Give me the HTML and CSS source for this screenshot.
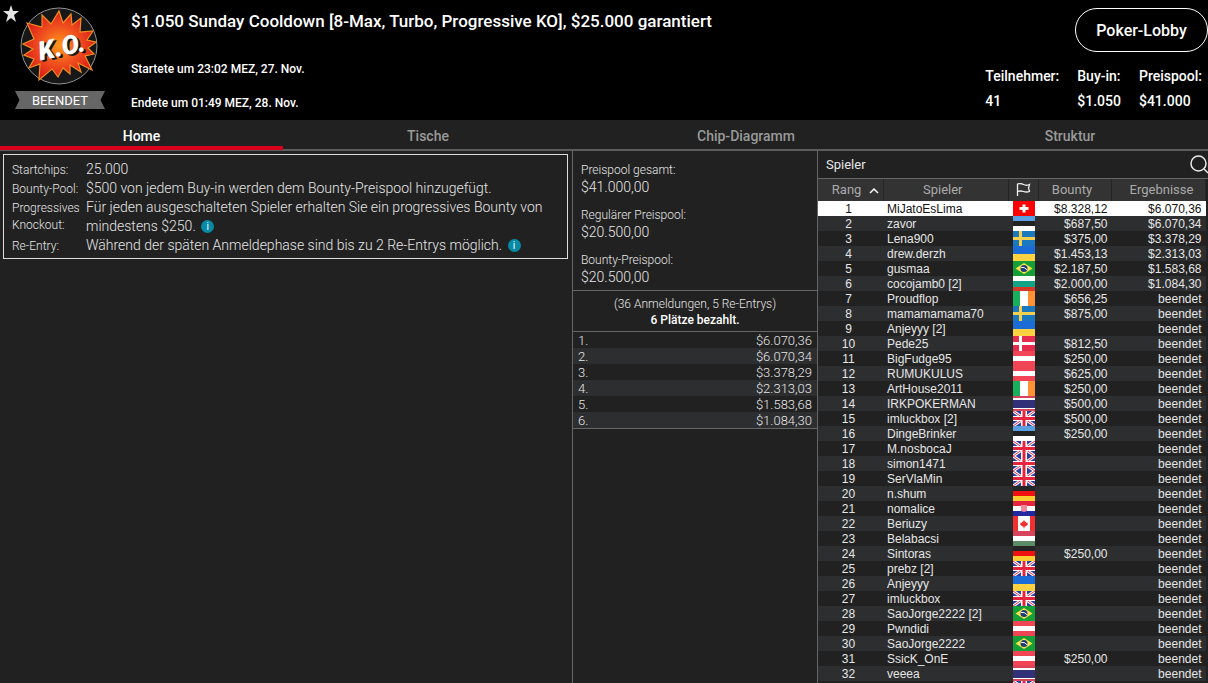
FILE: index.html
```html
<!doctype html>
<html lang="de">
<head>
	<meta charset="UTF-8">
	<meta name="viewport" content="width=device-width, initial-scale=1">
	<title>Sunday Cooldown</title>
	<link rel="stylesheet" href="styles.css">
</head>
<body>
	<svg class="defs" aria-hidden="true">
		<symbol id="ch" viewBox="0 0 22 15"><path fill="#f00" d="M0 0h22v15H0z"/><path fill="#fff" d="M9.500 3.500h3v2.500h3v3h-3v2.500h-3V9h-3V6h3z"/></symbol>
		<symbol id="ee" viewBox="0 0 22 15"><path fill="#5a9fe0" d="M0 0h22v5H0z"/><path fill="#222" d="M0 5h22v5H0z"/><path fill="#fff" d="M0 10h22v5H0z"/></symbol>
		<symbol id="se" viewBox="0 0 22 15"><path fill="#1c78bd" d="M0 0h22v15H0z"/><path fill="#f3d04e" d="M6 0h3v15H6zM0 6h22v3H0z"/></symbol>
		<symbol id="ua" viewBox="0 0 22 15"><path fill="#1b6cd6" d="M0 0h22v8H0z"/><path fill="#ffd242" d="M0 8h22v7H0z"/></symbol>
		<symbol id="br" viewBox="0 0 22 15"><path fill="#15a037" d="M0 0h22v15H0z"/><path fill="#fce14a" d="M11 2l8.500 5.500L11 13 2.500 7.500z"/><circle cx="11" cy="7.500" r="3.500" fill="#1d3d78"/><path d="M7.800 6.300q4-.5 6.300 2.500" fill="none" stroke="#fff"/></symbol>
		<symbol id="bg" viewBox="0 0 22 15"><path fill="#fff" d="M0 0h22v5H0z"/><path fill="#12a284" d="M0 5h22v6H0z"/><path fill="#d43829" d="M0 11h22v4H0z"/></symbol>
		<symbol id="ie" viewBox="0 0 22 15"><path fill="#19b05b" d="M0 0h7v15H0z"/><path fill="#fff" d="M7 0h8v15H7z"/><path fill="#ff9233" d="M15 0h7v15h-7z"/></symbol>
		<symbol id="dk" viewBox="0 0 22 15"><path fill="#e52b4e" d="M0 0h22v15H0z"/><path fill="#fff" d="M6 0h3v15H6zM0 6h22v3H0z"/></symbol>
		<symbol id="at" viewBox="0 0 22 15"><path fill="#f04555" d="M0 0h22v15H0z"/><path fill="#fff" d="M0 5h22v5H0z"/></symbol>
		<symbol id="th" viewBox="0 0 22 15"><path fill="#d8425a" d="M0 0h22v15H0z"/><path fill="#fff" d="M0 2h22v11H0z"/><path fill="#33307a" d="M0 4h22v8H0z"/></symbol>
		<symbol id="gb" viewBox="0 0 22 15"><path fill="#2b3f9b" d="M0 0h22v15H0z"/><path stroke="#fff" stroke-width="3" d="M0 0l22 15M22 0L0 15"/><path stroke="#e52b4e" d="M0 0l22 15M22 0L0 15"/><path fill="#fff" d="M8 0h6v15H8zM0 5h22v5H0z"/><path fill="#e5253f" d="M9.500 0h3v15h-3zM0 6h22v3H0z"/></symbol>
		<symbol id="de" viewBox="0 0 22 15"><path fill="#252525" d="M0 0h22v5H0z"/><path fill="#ef1010" d="M0 5h22v5H0z"/><path fill="#ffcc31" d="M0 10h22v5H0z"/></symbol>
		<symbol id="hr" viewBox="0 0 22 15"><path fill="#e5253f" d="M0 0h22v5H0z"/><path fill="#fff" d="M0 5h22v5H0z"/><path fill="#2228a0" d="M0 10h22v5H0z"/><path fill="#f08a9a" d="M8 4h6v6l-3 1-3-1z"/></symbol>
		<symbol id="ca" viewBox="0 0 22 15"><path fill="#fff" d="M0 0h22v15H0z"/><path fill="#f23030" d="M0 0h5v15H0zM17 0h5v15h-5zM11 4l1.200 2 1-.5L13 7l2-.5-.6 1.500.6.5-2.500 2h-1V12h-1v-1.500h-1L7 8.500l.6-.5L7 6.500 9 7l-.2-1.500 1 .5z"/></symbol>
		<symbol id="hu" viewBox="0 0 22 15"><path fill="#d6455d" d="M0 0h22v5H0z"/><path fill="#fff" d="M0 5h22v5H0z"/><path fill="#5b8c68" d="M0 10h22v5H0z"/></symbol>
	</svg>

	<header class="header">
		<button class="favorite" aria-label="Favorit">
			<svg width="16" height="17" viewBox="0 0 16 17"><path fill="#e4e4e4" d="M8 0l2 6h6l-5 4 2 7-5-4-5 4 2-7-5-4h6z"/></svg>
		</button>
		<div class="logo_box">
			<svg class="logo" width="80" height="80" viewBox="0 0 80 80" role="img" aria-label="K.O.">
				<defs>
					<radialGradient id="burst">
						<stop offset="0" stop-color="#ff9a1c"/>
						<stop offset=".55" stop-color="#f0501e"/>
						<stop offset="1" stop-color="#dc1f1c"/>
					</radialGradient>
				</defs>
				<circle cx="39" cy="40" r="38" fill="#171717" stroke="#929292"/>
				<path fill="url(#burst)" stroke="#ef8e20" stroke-width="1.200" d="M7 17L22 21 22 9 31 18 39 5 43 17 51 8 52 19 61 12 60 26 73 25 67 34 76 36 68 42 74 48 65 50 72 64 58 57 61 66 50 59 50 68 43 62 38 71 32 63 19 74 20 58 9 62 14 53 4 49 13 43 3 38 14 33z"/>
				<g class="logo_text">
					<text x="20" y="52" fill="#161616" transform="rotate(-12 40 42)">K.O.</text>
					<text x="18" y="50" fill="#fff" transform="rotate(-12 40 42)">K.O.</text>
				</g>
			</svg>
			<div class="status">BEENDET</div>
		</div>
		<div class="title_box">
			<h1>$1.050 Sunday Cooldown [8-Max, Turbo, Progressive KO], $25.000 garantiert</h1>
			<p>Startete um 23:02 MEZ, 27. Nov.</p>
			<p>Endete um 01:49 MEZ, 28. Nov.</p>
		</div>
		<div class="header_right">
			<button class="lobby">Poker-Lobby</button>
			<dl class="stats">
				<div><dt>Teilnehmer:</dt><dd>41</dd></div>
				<div><dt>Buy-in:</dt><dd>$1.050</dd></div>
				<div><dt>Preispool:</dt><dd>$41.000</dd></div>
			</dl>
		</div>
	</header>

	<nav class="tabs">
		<button class="tab tab_home active">Home</button>
		<button class="tab tab_tables">Tische</button>
		<button class="tab tab_chips">Chip-Diagramm</button>
		<button class="tab tab_structure">Struktur</button>
	</nav>

	<main class="content">
		<section class="left">
			<dl class="info">
				<dt>Startchips:</dt>
				<dd>25.000</dd>
				<dt>Bounty-Pool:</dt>
				<dd>$500 von jedem Buy-in werden dem Bounty-Preispool hinzugefügt.</dd>
				<dt>Progressives Knockout:</dt>
				<dd>Für jeden ausgeschalteten Spieler erhalten Sie ein progressives Bounty von mindestens $250. <button class="hint">i</button></dd>
				<dt>Re-Entry:</dt>
				<dd>Während der späten Anmeldephase sind bis zu 2 Re-Entrys möglich. <button class="hint">i</button></dd>
			</dl>
		</section>

		<section class="middle">
			<dl class="pool">
				<dt>Preispool gesamt:</dt><dd>$41.000,00</dd>
				<dt>Regulärer Preispool:</dt><dd>$20.500,00</dd>
				<dt>Bounty-Preispool:</dt><dd>$20.500,00</dd>
			</dl>
			<div class="entries">
				<p>(36 Anmeldungen, 5 Re-Entrys)</p>
				<p><b>6 Plätze bezahlt.</b></p>
			</div>
			<table class="payouts">
				<tr><td>1.</td><td>$6.070,36</td></tr>
				<tr><td>2.</td><td>$6.070,34</td></tr>
				<tr><td>3.</td><td>$3.378,29</td></tr>
				<tr><td>4.</td><td>$2.313,03</td></tr>
				<tr><td>5.</td><td>$1.583,68</td></tr>
				<tr><td>6.</td><td>$1.084,30</td></tr>
			</table>
		</section>

		<section class="right">
			<div class="search">
				<h2>Spieler</h2>
				<button class="search_btn" aria-label="Suchen">
					<svg width="18" height="20" viewBox="0 0 18 20" fill="none" stroke="#e8e8e8" stroke-width="1.500"><circle cx="8.500" cy="8.500" r="7.500"/><path d="M14 14l4 4"/></svg>
				</button>
			</div>
			<table class="players">
				<thead>
					<tr>
						<th class="rank">Rang <svg width="10" height="7" viewBox="0 0 10 7" fill="none" stroke="#fff" stroke-width="1.500"><path d="M1 6l4-4 4 4"/></svg></th>
						<th class="name">Spieler</th>
						<th class="flag" aria-label="Land"><svg width="15" height="13" viewBox="0 0 15 13" fill="none" stroke="#eee" stroke-width="1.300"><path d="M1.500 13V1q3-1 6 .5t6 0L12.500 5l1 3.500q-3 1-6 0t-6 0"/></svg></th>
						<th class="bounty">Bounty</th>
						<th class="result">Ergebnisse</th>
					</tr>
				</thead>
				<tbody id="players"></tbody>
			</table>
		</section>
	</main>
<script src="script.js"></script>
</body>
</html>
```
FILE: styles.css
```css
*{box-sizing: border-box;
  margin: 0;
  padding: 0;}
body{background-color: #212121;
     color: #e6e6e6;
     font-family: Roboto, sans-serif;
     height: 100vh;
     display: flex;
     flex-direction: column;
     overflow: hidden;}
button{background: none;
       border: 0;
       color: inherit;
       font-family: inherit;
       cursor: pointer;}
.defs{position: absolute;
      width: 0;
      height: 0;}

/* header */
.header{background-color: #000;
        color: #fff;
        display: flex;
        height: 120px;
        flex: none;}
.favorite{width: 20px;
          height: 24px;
          padding-left: 2px;
          margin-top: 3px;
          margin-right: -5px;
          z-index: 1;}
.logo_box{width: 90px;
          padding-top: 6px;
          display: flex;
          flex-direction: column;
          align-items: center;
          gap: 5px;}
.logo{display: block;}
.logo_text{font: italic 900 26px Roboto, sans-serif;}
.status{width: 90px;
        height: 18px;
        line-height: 20px;
        font-size: 13px;
        text-align: center;
        background-color: #666;
        clip-path: polygon(0 0, 100% 0, 95% 50%, 100% 100%, 0 100%, 5% 50%);}
.title_box{flex: 1;
           padding: 10px 0 0 26px;}
.title_box h1{font-size: 17px;
              font-weight: 500;
              line-height: 22px;
              margin-bottom: 28px;}
.title_box p{font-size: 12px;
             font-weight: 500;
             line-height: 18px;
             margin-bottom: 16px;}
.header_right{display: flex;
              flex-direction: column;
              align-items: flex-end;
              padding-top: 8px;}
.lobby{width: 133px;
       height: 44px;
       border: 1px solid #fff;
       border-radius: 22px;
       font-size: 16px;
       font-weight: 500;}
.stats{display: flex;
       gap: 18px;
       padding: 12px 6px 0 0;
       font-size: 14px;
       font-weight: 500;
       line-height: 25px;}

/* tabs, the strip runs a little past the window edge */
.tabs{display: flex;
      flex: none;
      height: 31px;
      margin-right: -13px;
      border-bottom: 2px solid #5c5c5c;}
.tab{flex-basis: 0;
     height: 30px;
     padding-top: 5px;
     border-bottom: 4px solid transparent;
     font-size: 14px;
     font-weight: 500;
     color: #999;}
.tab_home{flex-grow: 283;}
.tab_tables{flex-grow: 290;}
.tab_chips{flex-grow: 346;}
.tab_structure{flex-grow: 302;}
.active{color: #fff;
        border-bottom-color: #d9001b;}

.content{flex: 1;
         min-height: 0;
         display: grid;
         grid-template-columns: 1fr 245px 391px;}

/* tournament info */
.left{padding: 3px 4px 0 3px;}
.info{display: grid;
      grid-template-columns: 74px 1fr;
      border: 1px solid #ddd;
      padding: 5px 8px 3px 8px;
      font-weight: 300;}
.info dt{font-size: 12px;
         line-height: 17px;
         padding-top: 2px;}
.info dd{font-size: 14px;
         line-height: 19px;}
.hint{width: 13px;
      height: 13px;
      margin-left: 2px;
      border-radius: 50%;
      background-color: #078aa5;
      color: #fff;
      font-size: 10px;
      line-height: 13px;
      vertical-align: 1px;}

/* prize pool */
.middle{border-left: 1px solid #666;
        font-weight: 300;}
.pool{padding: 10px 8px 3px 8px;
      border-bottom: 1px solid #666;}
.pool dt{font-size: 12px;
         line-height: 18px;}
.pool dd{font-size: 14px;
         line-height: 17px;
         margin-bottom: 10px;}
.pool dd:last-child{margin-bottom: 1px;}
.entries{text-align: center;
         font-size: 12px;
         line-height: 16px;
         padding: 5px 0 3px 0;
         border-bottom: 1px solid #666;}
.entries b{font-weight: 500;
           color: #fff;}
.payouts{width: 100%;
         border-collapse: collapse;
         border-bottom: 1px solid #666;
         font-size: 13px;
         line-height: 15px;}
.payouts tr:nth-child(even){background-color: #2d2e30;}
.payouts td{padding: 1px 5px 0 5px;}
.payouts td:last-child{text-align: right;}

/* player list */
.right{border-left: 1px solid #666;
       overflow: hidden;}
.search{display: flex;
        justify-content: space-between;
        align-items: center;
        height: 28px;
        padding-left: 8px;
        border-bottom: 1px solid #666;}
.search h2{font-size: 13px;
           font-weight: 400;}
.search_btn{height: 20px;}
.players{table-layout: fixed;
         width: calc(100% - 2px);
         border-collapse: collapse;
         font-family: "Liberation Sans", Arial, sans-serif;
         font-size: 12px;}
.players th{height: 22px;
            padding-bottom: 2px;
            background-color: #333;
            border-right: 1px solid #262626;
            color: #aaa;
            font-family: Roboto, sans-serif;
            font-size: 13px;
            font-weight: 400;}
.players .rank{width: 65px;
               padding-left: 10px;}
.rank svg{margin-left: 4px;}
.players .name{padding-right: 6px;}
.flag{width: 30px;}
.flag svg{display: block;
          margin: auto;}
.players .bounty{width: 73px;
                 padding-right: 6px;}
.players .result{width: 94px;
                 padding-left: 6px;}
.players td{height: 15px;
            line-height: 14px;
            padding-top: 1px;
            white-space: nowrap;}
.players td.flag{padding: 0;}
.players tr:nth-child(even) td{background-color: #2d2e30;}
.players tbody tr:first-child td{background-color: #fff;
                                 color: #111;}
.players td:nth-child(1){text-align: center;
                         padding-right: 4px;}
.players td:nth-child(2){padding-left: 4px;}
.players td:nth-child(4),
.players td:nth-child(5){text-align: right;
                         padding-right: 4px;}
```
FILE: script.js
```js
var list=[
	['MiJatoEsLima','ch','$8.328,12','$6.070,36'],
	['zavor','ee','$687,50','$6.070,34'],
	['Lena900','se','$375,00','$3.378,29'],
	['drew.derzh','ua','$1.453,13','$2.313,03'],
	['gusmaa','br','$2.187,50','$1.583,68'],
	['cocojamb0 [2]','bg','$2.000,00','$1.084,30'],
	['Proudflop','ie','$656,25'],
	['mamamamama70','se','$875,00'],
	['Anjeyyy [2]','ua',''],
	['Pede25','dk','$812,50'],
	['BigFudge95','at','$250,00'],
	['RUMUKULUS','at','$625,00'],
	['ArtHouse2011','ie','$250,00'],
	['IRKPOKERMAN','th','$500,00'],
	['imluckbox [2]','gb','$500,00'],
	['DingeBrinker','ee','$250,00'],
	['M.nosbocaJ','gb',''],
	['simon1471','gb',''],
	['SerVlaMin','gb',''],
	['n.shum','de',''],
	['nomalice','hr',''],
	['Beriuzy','ca',''],
	['Belabacsi','hu',''],
	['Sintoras','de','$250,00'],
	['prebz [2]','gb',''],
	['Anjeyyy','ua',''],
	['imluckbox','gb',''],
	['SaoJorge2222 [2]','br',''],
	['Pwndidi','at',''],
	['SaoJorge2222','br',''],
	['SsicK_OnE','at','$250,00'],
	['veeea','th',''],
	['','gb','','']
];
var html='';
for(var i=0;i<list.length;i++)
{
	var p=list[i];
	// the last row is only a sliver at the window edge
	var rank=p[0]?i+1:'';
	var result=p[3]===undefined?'beendet':p[3];
	html+='<tr><td>'+rank+'</td><td>'+p[0]+'</td><td class="flag"><svg width="22" height="15"><use href="#'+p[1]+'"/></svg></td><td>'+p[2]+'</td><td>'+result+'</td></tr>';
}
document.getElementById('players').innerHTML=html;
```
